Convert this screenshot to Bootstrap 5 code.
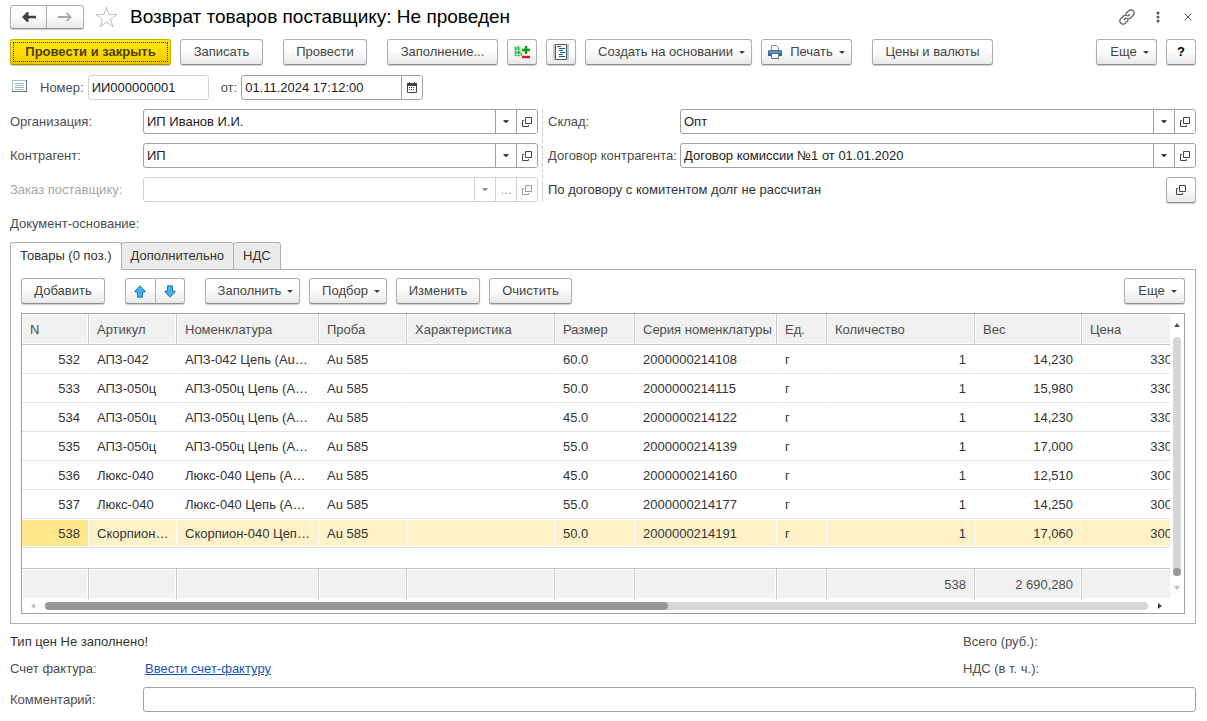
<!DOCTYPE html>
<html lang="ru">
<head>
<meta charset="utf-8">
<meta name="viewport" content="width=device-width, initial-scale=1">
<title>Возврат товаров поставщику</title>
<link href="https://cdn.jsdelivr.net/npm/bootstrap@5.3.0/dist/css/bootstrap.min.css" rel="stylesheet">
<style>
  body { font-family: "Liberation Sans", Arial, sans-serif; font-size: 13px; line-height: 16px; color: #333; background: #fff; }
  button, input, select { font-family: inherit; }
  svg { display: block; flex: none; }
  .page-form { padding: 5px 11px 9px 10px; }
  .gap-tool { gap: 9px; }
  .space-left { margin-left: 11px; }
  .main-tools { margin: 10px 0; }
  .number-line { margin-bottom: 9px; }
  .basis-line { margin: 10px 0; }
  h1 { font-size: 19px; line-height: 24px; color: #000; font-weight: 400; margin: 0; }

  /* Buttons */
  .btn-form { --bs-btn-color: #444; --bs-btn-border-color: #b0b0b0; --bs-btn-border-radius: 3px; --bs-btn-padding-x: 0; --bs-btn-padding-y: 0;
    --bs-btn-font-size: 13px; --bs-btn-line-height: 16px; --bs-btn-hover-color: #222; --bs-btn-hover-border-color: #999;
    height: 26px; flex: none; display: inline-flex; align-items: center; justify-content: center; white-space: nowrap;
    border-bottom-color: #8f8f8f; background: linear-gradient(#fff 40%, #e9e9e9); box-shadow: 0 1px 1px #ccc; }
  .btn-form.dropdown-toggle::after { border-width: 3px 3px 0; margin-left: 6px; margin-top: 1px; vertical-align: 0; }
  .btn-main { color: #4a4000; background: linear-gradient(#ffe81a, #ffdd00 50%, #efc900); border-color: #c9a800; border-bottom-color: #a58a00; font-weight: 700; outline: 1px dotted #22228a; outline-offset: -4px; }
  .w-icon { width: 30px; } .w-xs { width: 61px; } .w-sm { width: 83px; } .w-mid { width: 84px; } .w-print { width: 91px; } .w-md { width: 95px; } .w-lg { width: 111px; } .w-xl { width: 121px; } .w-main { width: 161px; } .w-based { width: 167px; padding-left: 6px; }
  .w-pick { width: 78px; }
  .w-more { padding-left: 6px; }
  .nav-pair .btn-form { height: 24px; width: 38px; margin-right: -1px; }
  .move-pair { width: 60px; }
  .move-pair .btn-form { flex: 1 1 0; }
  .btn-plain { border: 0; background: none; padding: 0; color: #444; display: flex; align-items: center; justify-content: center; }

  /* Fields */
  .field-row { display: flex; height: 25px; border: 1px solid #a0a0a0; border-radius: 3px; background: #fff; overflow: hidden; min-width: 0; }
  .field-row > input { flex: 1 1 0; min-width: 0; border: 0; padding: 0 3px; color: #222; background: none; outline: 0; height: 23px; }
  .field-row > button { width: 21px; flex: none; border: 0; border-left: 1px solid #a0a0a0; padding: 0; background: #fff; display: flex; align-items: center; justify-content: center; color: #444; }
  .field-row.is-off, .field-row.is-off > button { border-color: #d3d3d3; color: #999; }
  .field-row.is-off > button { line-height: 12px; }
  .caption { color: #4d4d4d; white-space: nowrap; }
  .caption.is-off { color: #a6a6a6; }
  .w-number { width: 121px; } .w-date { width: 182px; }
  .form-pairs { display: grid; grid-template-columns: 133px minmax(0, 395fr) 10px 132px minmax(0, 516fr); row-gap: 9px; align-items: center; }
  .form-pairs .divider { grid-column: 3; grid-row: 1 / span 3; align-self: stretch; margin-left: 4px; width: 1px; background: repeating-linear-gradient(#ccc 0 4px, transparent 4px 6px); }
  .c1 { grid-column: 1; } .c2 { grid-column: 2; } .c4 { grid-column: 4; } .c5 { grid-column: 5; }
  .c4-5 { grid-column: 4 / span 2; height: 25px; }
  .label-col { width: 133px; flex: none; }

  /* Tabs */
  .nav-form { margin-bottom: -1px; border-bottom: 0; position: relative; }
  .nav-form .nav-link { height: 28px; padding: 0 9px; margin: 0 -1px 0 0; border: 1px solid #b0b0b0; border-radius: 3px 3px 0 0; background: #ebebeb; color: #333; font-size: 13px; }
  .nav-form .nav-link.active { background: #fff; border-color: #b0b0b0 #b0b0b0 #fff; color: #333; }
  .tab-panel { border: 1px solid #b0b0b0; padding: 8px 10px 9px; }

  /* Goods grid */
  .goods-box { border: 1px solid #a0a0a0; margin-top: 9px; }
  .goods-view { flex: 1 1 0; min-width: 0; overflow: hidden; }
  .goods { table-layout: fixed; width: 1159px; border-collapse: separate; border-spacing: 0; }
  .goods th, .goods td { padding: 1px 5px 0 8px; overflow: hidden; text-overflow: ellipsis; white-space: nowrap; }
  .goods td.text-end, .goods td:nth-child(3) { padding-right: 8px; }
  .goods thead th { padding-right: 0; height: 31px; font-weight: 400; color: #4d4d4d; background: #f1f1f1; border-right: 1px solid #c8c8c8; border-bottom: 1px solid #c8c8c8; box-shadow: inset 0 0 0 1px #fff; }
  .goods tbody td { height: 29px; border-bottom: 1px solid #e2e2e6; border-right: 1px solid transparent; }
  .goods tbody tr.picked td { background: #fff2c8; border-right-color: #fff; box-shadow: inset 0 1px #fff, inset 0 -1px #fff; }
  .goods tbody tr.picked td:first-child { background: #ffe58c; }
  .goods tbody tr.spare td { height: 20px; border: 0; }
  .goods tfoot td { height: 31px; color: #4d4d4d; background: #f1f1f1; border-top: 1px solid #c8c8c8; border-right: 1px solid #c8c8c8; box-shadow: inset 0 0 0 1px #fff; }
  .scroll-y { width: 14px; padding: 9px 3px; gap: 10px; }
  .rail { background: #d6d6d6; border-radius: 4px; }
  .rail-y { width: 8px; flex: 1 1 0; display: flex; align-items: flex-end; }
  .grip { background: #989898; border-radius: 4px; height: 8px; }
  .scroll-x { height: 14px; padding: 0 22px 0 9px; }
  .rail-x { flex: 1 1 0; height: 8px; margin: 0 10px; }
  .tri { width: 0; height: 0; border: 3px solid transparent; flex: none; }
  .tri-up { border-top: 0; border-bottom: 4px solid #555; }
  .tri-down { border-bottom: 0; border-top: 4px solid #bbb; }
  .tri-left { border-left: 0; border-right: 4px solid #bbb; }
  .tri-right { border-right: 0; border-left: 4px solid #444; }
  .form-foot { display: grid; grid-template-columns: minmax(0, 1fr) 233px; row-gap: 11px; padding: 10px 0; }
  .form-foot a { color: #1155bb; padding-left: 2px; }
</style>
</head>
<body>
<svg width="0" height="0" class="position-absolute" aria-hidden="true">
  <symbol id="open" viewBox="0 0 10 10"><path d="M3.500.5h6v6h-6zM2 3.500H.5v6h6V8" fill="none" stroke="currentColor"/></symbol>
  <symbol id="caret" viewBox="0 0 6 4"><path d="M.5 0h5v1L3.500 3h-1L.5 1z" fill="currentColor"/></symbol>
</svg>

<main class="page-form">
  <header class="d-flex align-items-center">
    <div class="nav-pair btn-group">
      <button class="btn btn-form" type="button" aria-label="Назад"><svg width="14" height="10" viewBox="0 0 14 10"><path d="M0 5l5-5h1.500v3.800H14v2.400H6.500V10H5z" fill="#404040"/></svg></button>
      <button class="btn btn-form" type="button" aria-label="Вперед"><svg width="14" height="10" viewBox="0 0 14 10"><path d="M0 5h13M8.500.8 12.800 5 8.500 9.200" fill="none" stroke="#a8a8a8" stroke-width="1.800"/></svg></button>
    </div>
    <button class="btn-plain ms-2 px-1" type="button" aria-label="В избранное"><svg width="23" height="24" viewBox="0 0 24 24"><path d="M12 1.800l2.600 7.700h8.200l-6.600 4.900 2.500 7.800-6.700-4.800-6.700 4.800 2.500-7.800L1.200 9.500h8.200z" fill="#fff" stroke="#b4bac4"/></svg></button>
    <h1 class="ms-2 text-nowrap">Возврат товаров поставщику: Не проведен</h1>
    <div class="ms-auto d-flex align-items-center gap-3">
      <button class="btn-plain" type="button" aria-label="Ссылка"><svg width="18" height="18" viewBox="0 0 18 18"><g fill="none" stroke="#555" stroke-width="1.200" stroke-linecap="round"><path d="M8 5.500l2.800-2.800a2.900 2.900 0 0 1 4.200 0l.3.300a2.900 2.900 0 0 1 0 4.200l-2.800 2.800a2.900 2.900 0 0 1-3.200.6M10 12.500l-2.800 2.800a2.900 2.900 0 0 1-4.200 0l-.3-.3a2.900 2.900 0 0 1 0-4.200l2.800-2.800a2.900 2.900 0 0 1 3.200-.6M6.500 11.500l1.500-1.500M10 8l1.500-1.500"/></g></svg></button>
      <button class="btn-plain px-1" type="button" aria-label="Меню"><svg width="4" height="12" viewBox="0 0 4 12"><g fill="#555"><circle cx="2" cy="2" r="1.500"/><circle cx="2" cy="6" r="1.500"/><circle cx="2" cy="10" r="1.500"/></g></svg></button>
      <button class="btn-plain px-1" type="button" aria-label="Закрыть"><svg width="8" height="8" viewBox="0 0 8 8"><path d="M.5.5l7 7M7.500.5l-7 7" stroke="#555"/></svg></button>
    </div>
  </header>

  <div class="d-flex gap-tool main-tools">
    <button class="btn btn-form btn-main w-main" type="button">Провести и закрыть</button>
    <button class="btn btn-form w-sm" type="button">Записать</button>
    <button class="btn btn-form w-mid space-left" type="button">Провести</button>
    <button class="btn btn-form w-lg space-left" type="button">Заполнение...</button>
    <button class="btn btn-form w-icon" type="button" aria-label="Изменить состав"><svg width="17" height="16" viewBox="0 0 17 16"><path d="M1 2l3-1 3 1v10l-3 1-3-1z" fill="#b9f0b0"/><path d="M1.500 3v9M4.500 3v9" stroke="#18a53c" stroke-width="1.600" stroke-dasharray="3 1"/><path d="M8 6h8M12 2v8" stroke="#0a9a14" stroke-width="2.400"/><path d="M5 8l3 2-1 2" stroke="#3488c8" fill="none"/><path d="M8 13h8" stroke="#e81010" stroke-width="2.400"/></svg></button>
    <button class="btn btn-form w-icon" type="button" aria-label="Движения документа"><svg width="16" height="16" viewBox="0 0 16 16"><path d="M0 0h16v16H0z" fill="#c6c6c6"/><path d="M2.500.5h11v15h-11z" fill="#fff" stroke="#4e5860"/><path d="M4 2.500h4M6 4.500h6M6 6.500h4M7 8.500h5M6 10.500h4M6 12.500h6" stroke="#0d5f92"/></svg></button>
    <button class="btn btn-form dropdown-toggle w-based" type="button">Создать на основании</button>
    <button class="btn btn-form dropdown-toggle w-print" type="button"><svg class="me-2" width="14" height="14" viewBox="0 0 14 14"><path d="M3.500 5V.5h5l2 2V5" fill="#fff" stroke="#7890a8"/><path d="M1 5h12l1 1v5H0V6z" fill="#3a6a94"/><path d="M1 7h12" stroke="#9dbad0"/><path d="M3.500 8.500h7v5h-7z" fill="#fff" stroke="#55789a"/></svg>Печать</button>
    <button class="btn btn-form w-xl space-left" type="button">Цены и валюты</button>
    <button class="btn btn-form dropdown-toggle w-xs w-more ms-auto" type="button">Еще</button>
    <button class="btn btn-form w-icon fw-bold text-black" type="button" aria-label="Справка">?</button>
  </div>

  <div class="d-flex align-items-center number-line">
    <svg class="mb-1" width="18" height="14" viewBox="0 0 18 14"><path d="M2.500 1.500h14v11h-14z" fill="#fff" stroke="#a8bccb"/><path d="M2 12.500h14.500V1" fill="none" stroke="#5d6f7c"/><path d="M5 4.500h9M5 6.500h9M5 8.500h9M5 10.500h9" stroke="#9db4c5"/></svg>
    <label class="caption ms-2 ps-1" for="num">Номер:</label>
    <div class="field-row is-off w-number ms-1"><input id="num" type="text" value="ИИ000000001" readonly></div>
    <label class="caption ms-2 ps-1" for="date">от:</label>
    <div class="field-row w-date ms-1"><input id="date" type="text" value="01.11.2024 17:12:00"><button type="button" aria-label="Календарь"><svg width="10" height="11" viewBox="0 0 10 11"><path d="M.5 1.500h9v9h-9z" fill="#fff" stroke="#444"/><path d="M0 1h10v3H0zM2 0h1v2H2zM7 0h1v2H7z" fill="#444"/><path d="M2 5.500h6M2 7.500h6" stroke="#444" stroke-dasharray="1 1"/></svg></button></div>
  </div>

  <section class="form-pairs">
    <label class="caption c1" for="org">Организация:</label>
    <div class="field-row c2"><input id="org" type="text" value="ИП Иванов И.И."><button type="button" aria-label="Выбрать"><svg width="6" height="4"><use href="#caret"/></svg></button><button type="button" aria-label="Открыть"><svg width="10" height="10"><use href="#open"/></svg></button></div>
    <div class="divider"></div>
    <label class="caption c4" for="store">Склад:</label>
    <div class="field-row c5"><input id="store" type="text" value="Опт"><button type="button" aria-label="Выбрать"><svg width="6" height="4"><use href="#caret"/></svg></button><button type="button" aria-label="Открыть"><svg width="10" height="10"><use href="#open"/></svg></button></div>

    <label class="caption c1" for="agent">Контрагент:</label>
    <div class="field-row c2"><input id="agent" type="text" value="ИП"><button type="button" aria-label="Выбрать"><svg width="6" height="4"><use href="#caret"/></svg></button><button type="button" aria-label="Открыть"><svg width="10" height="10"><use href="#open"/></svg></button></div>
    <label class="caption c4" for="deal">Договор контрагента:</label>
    <div class="field-row c5"><input id="deal" type="text" value="Договор комиссии №1 от 01.01.2020"><button type="button" aria-label="Выбрать"><svg width="6" height="4"><use href="#caret"/></svg></button><button type="button" aria-label="Открыть"><svg width="10" height="10"><use href="#open"/></svg></button></div>

    <label class="caption is-off c1" for="order">Заказ поставщику:</label>
    <div class="field-row is-off c2"><input id="order" type="text" disabled><button type="button" disabled aria-label="Выбрать"><svg width="6" height="4"><use href="#caret"/></svg></button><button type="button" disabled>...</button><button type="button" disabled aria-label="Открыть"><svg width="10" height="10"><use href="#open"/></svg></button></div>
    <div class="c4-5 d-flex align-items-center justify-content-between"><span>По договору с комитентом долг не рассчитан</span><button class="btn btn-form w-icon" type="button" aria-label="Открыть расчеты"><svg width="10" height="10"><use href="#open"/></svg></button></div>
  </section>

  <div class="caption basis-line pt-1">Документ-основание:</div>

  <ul class="nav nav-tabs nav-form" role="tablist">
    <li class="nav-item"><button class="nav-link active" type="button" role="tab" aria-selected="true">Товары (0 поз.)</button></li>
    <li class="nav-item"><button class="nav-link" type="button" role="tab">Дополнительно</button></li>
    <li class="nav-item"><button class="nav-link" type="button" role="tab">НДС</button></li>
  </ul>
  <section class="tab-panel">
    <div class="d-flex gap-tool">
      <button class="btn btn-form w-mid" type="button">Добавить</button>
      <div class="move-pair btn-group space-left">
        <button class="btn btn-form" type="button" aria-label="Вверх"><svg width="12" height="13" viewBox="0 0 12 13"><path d="M6 .8l5 5.200v1H8.500v5.200h-5V7H1V6z" fill="#43b0ee" stroke="#2878b4"/></svg></button>
        <button class="btn btn-form" type="button" aria-label="Вниз"><svg width="12" height="13" viewBox="0 0 12 13"><path d="M6 12.200l5-5.200V6H8.500V.8h-5V6H1v1z" fill="#43b0ee" stroke="#2878b4"/></svg></button>
      </div>
      <button class="btn btn-form dropdown-toggle w-md w-more space-left" type="button">Заполнить</button>
      <button class="btn btn-form dropdown-toggle w-pick w-more" type="button">Подбор</button>
      <button class="btn btn-form w-mid" type="button">Изменить</button>
      <button class="btn btn-form w-sm" type="button">Очистить</button>
      <button class="btn btn-form dropdown-toggle w-xs w-more ms-auto" type="button">Еще</button>
    </div>

    <div class="goods-box">
      <div class="d-flex">
        <div class="goods-view">
          <table class="goods">
            <colgroup><col style="width:67px"><col style="width:88px"><col style="width:142px"><col style="width:88px"><col style="width:148px"><col style="width:80px"><col style="width:142px"><col style="width:50px"><col style="width:148px"><col style="width:107px"><col style="width:99px"></colgroup>
            <thead><tr><th>N</th><th>Артикул</th><th>Номенклатура</th><th>Проба</th><th>Характеристика</th><th>Размер</th><th>Серия номенклатуры</th><th>Ед.</th><th>Количество</th><th>Вес</th><th>Цена</th></tr></thead>
            <tbody>
              <tr><td class="text-end">532</td><td>АПЗ-042</td><td>АПЗ-042 Цепь (Au 585)</td><td>Au 585</td><td></td><td>60.0</td><td>2000000214108</td><td>г</td><td class="text-end">1</td><td class="text-end">14,230</td><td class="text-end">330</td></tr>
              <tr><td class="text-end">533</td><td>АПЗ-050ц</td><td>АПЗ-050ц Цепь (Au 585)</td><td>Au 585</td><td></td><td>50.0</td><td>2000000214115</td><td>г</td><td class="text-end">1</td><td class="text-end">15,980</td><td class="text-end">330</td></tr>
              <tr><td class="text-end">534</td><td>АПЗ-050ц</td><td>АПЗ-050ц Цепь (Au 585)</td><td>Au 585</td><td></td><td>45.0</td><td>2000000214122</td><td>г</td><td class="text-end">1</td><td class="text-end">14,230</td><td class="text-end">330</td></tr>
              <tr><td class="text-end">535</td><td>АПЗ-050ц</td><td>АПЗ-050ц Цепь (Au 585)</td><td>Au 585</td><td></td><td>55.0</td><td>2000000214139</td><td>г</td><td class="text-end">1</td><td class="text-end">17,000</td><td class="text-end">330</td></tr>
              <tr><td class="text-end">536</td><td>Люкс-040</td><td>Люкс-040 Цепь (Au 585)</td><td>Au 585</td><td></td><td>45.0</td><td>2000000214160</td><td>г</td><td class="text-end">1</td><td class="text-end">12,510</td><td class="text-end">300</td></tr>
              <tr><td class="text-end">537</td><td>Люкс-040</td><td>Люкс-040 Цепь (Au 585)</td><td>Au 585</td><td></td><td>55.0</td><td>2000000214177</td><td>г</td><td class="text-end">1</td><td class="text-end">14,250</td><td class="text-end">300</td></tr>
              <tr class="picked"><td class="text-end">538</td><td>Скорпион-040</td><td>Скорпион-040 Цепь (Au 585)</td><td>Au 585</td><td></td><td>50.0</td><td>2000000214191</td><td>г</td><td class="text-end">1</td><td class="text-end">17,060</td><td class="text-end">300</td></tr>
              <tr class="spare"><td colspan="11"></td></tr>
            </tbody>
            <tfoot><tr><td></td><td></td><td></td><td></td><td></td><td></td><td></td><td></td><td class="text-end">538</td><td class="text-end">2 690,280</td><td></td></tr></tfoot>
          </table>
        </div>
        <div class="scroll-y d-flex flex-column align-items-center" aria-hidden="true">
          <span class="tri tri-up"></span><div class="rail rail-y"><div class="grip w-100"></div></div><span class="tri tri-down"></span>
        </div>
      </div>
      <div class="scroll-x d-flex align-items-center" aria-hidden="true">
        <span class="tri tri-left"></span><div class="rail rail-x"><div class="grip" style="width:56.5%"></div></div><span class="tri tri-right"></span>
      </div>
    </div>
  </section>

  <footer>
    <div class="form-foot">
      <span>Тип цен Не заполнено!</span><span class="caption">Всего (руб.):</span>
      <div class="d-flex"><span class="caption label-col">Счет фактура:</span><a href="#">Ввести счет-фактуру</a></div><span class="caption">НДС (в т. ч.):</span>
    </div>
    <div class="d-flex align-items-center">
      <label class="caption label-col" for="note">Комментарий:</label>
      <div class="field-row flex-grow-1"><input id="note" type="text"></div>
    </div>
  </footer>
</main>
<script src="https://cdn.jsdelivr.net/npm/bootstrap@5.3.0/dist/js/bootstrap.bundle.min.js"></script>
</body>
</html>
